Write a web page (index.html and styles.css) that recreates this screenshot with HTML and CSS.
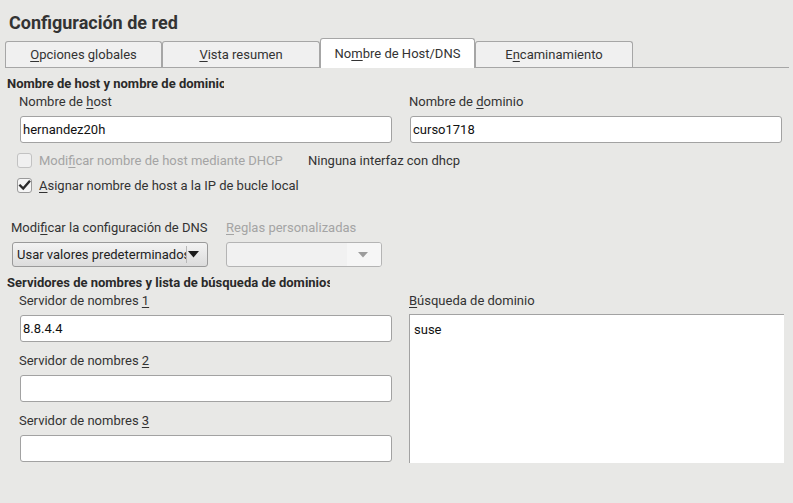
FILE: index.html
```html
<!DOCTYPE html>
<html lang="es">
<head>
<meta charset="utf-8">
<title>Configuración de red</title>
<link rel="stylesheet" href="styles.css">
</head>
<body>
<div class="win">
  <h1 class="title">Configuración de red</h1>

  <div class="tabs">
    <div class="tab t1"><u>O</u>pciones globales</div>
    <div class="tab t2"><u>V</u>ista resumen</div>
    <div class="tab t3 active">No<u>m</u>bre de Host/DNS</div>
    <div class="tab t4">E<u>n</u>caminamiento</div>
  </div>

  <div class="section-head sh1">Nombre de host y nombre de dominio</div>
  <div class="grid">
    <div class="field">
      <div class="label">Nombre de <u>h</u>ost</div>
      <div class="input">hernandez20h</div>
    </div>
    <div class="field">
      <div class="label">Nombre de <u>d</u>ominio</div>
      <div class="input">curso1718</div>
    </div>
  </div>

  <div class="checks">
    <div class="check-row">
      <div class="check-main">
        <span class="cb disabled"></span>
        <span class="cb-label dim">Modi<u>f</u>icar nombre de host mediante DHCP</span>
      </div>
      <span class="note">Ninguna interfaz con dhcp</span>
    </div>
    <div class="check-row">
      <div class="check-main">
        <span class="cb checked"><svg width="13" height="13" viewBox="0 0 13 13"><path d="M2.2 6.6 L5.2 9.6 L11.2 2.6" fill="none" stroke="#2d2d2d" stroke-width="2.4" stroke-linecap="square"/></svg></span>
        <span class="cb-label"><u>A</u>signar nombre de host a la IP de bucle local</span>
      </div>
    </div>
  </div>

  <div class="dns-row">
    <div class="dns-col c1">
      <div class="label">Modi<u>f</u>icar la configuración de DNS</div>
      <div class="select s1">
        <span class="sel-text">Usar valores predeterminados</span>
        <span class="sel-sep"></span>
        <svg class="sel-arrow" width="11" height="7" viewBox="0 0 11 7"><path d="M0 0 H11 L5.5 6.5 Z" fill="#1c1c1c"/></svg>
      </div>
    </div>
    <div class="dns-col c2">
      <div class="label dim"><u>R</u>eglas personalizadas</div>
      <div class="select s2">
        <span class="sel-fill"></span>
        <span class="sel-end"><svg width="10" height="6" viewBox="0 0 10 6"><path d="M0 0 H10 L5 5.5 Z" fill="#9c9c9c"/></svg></span>
      </div>
    </div>
  </div>

  <div class="section-head sh2">Servidores de nombres y lista de búsqueda de dominios</div>
  <div class="grid">
    <div class="col">
      <div class="field">
        <div class="label">Servidor de nombres <u>1</u></div>
        <div class="input">8.8.4.4</div>
      </div>
      <div class="field">
        <div class="label">Servidor de nombres <u>2</u></div>
        <div class="input"></div>
      </div>
      <div class="field">
        <div class="label">Servidor de nombres <u>3</u></div>
        <div class="input"></div>
      </div>
    </div>
    <div class="col">
      <div class="label"><u>B</u>úsqueda de dominio</div>
      <div class="textarea">suse</div>
    </div>
  </div>
</div>
</body>
</html>
```

FILE: styles.css
```css
html, body {
  margin: 0;
  padding: 0;
  background: #e8e8e6;
}
body {
  width: 793px;
  height: 503px;
  overflow: hidden;
  font-family: Roboto, "Noto Sans", "Liberation Sans", sans-serif;
  font-size: 13px;
  color: #333333;
}
u {
  text-decoration: underline;
  text-underline-offset: 2px;
}
.title {
  margin: 0;
  padding: 7px 0 0 9px;
  height: 31px;
  line-height: 31px;
  font-size: 18px;
  font-weight: 700;
  color: #333333;
}
.tabs {
  display: flex;
  align-items: flex-end;
  height: 29px;
  margin: 0 4px 0 5px;
  border-bottom: 1px solid #a6a6a6;
}
.tab {
  box-sizing: border-box;
  height: 26px;
  line-height: 25px;
  text-align: center;
  background: #f0f0f0;
  border: 1px solid #a6a6a6;
  border-bottom: none;
  border-radius: 3px 3px 0 0;
  color: #333333;
  white-space: nowrap;
}
.t1 { width: 157px; }
.t2 { width: 158px; }
.t3 { width: 155px; }
.t4 { width: 158px; }
.tab.active {
  height: 30px;
  padding-top: 2px;
  margin-bottom: -1px;
  background: #ffffff;
}
.section-head {
  margin-left: 7px;
  height: 18px;
  line-height: 18px;
  font-weight: 700;
  color: #2a2a2a;
  white-space: nowrap;
  overflow: hidden;
}
.sh1 { margin-top: 7px; width: 217px; }
.sh2 { margin-top: 7px; width: 323px; }
.grid {
  display: grid;
  grid-template-columns: 372px 372px;
  column-gap: 18px;
  margin-left: 20px;
}
.col {
  display: flex;
  flex-direction: column;
}
.col .field + .field {
  margin-top: 10px;
}
.label {
  height: 18px;
  line-height: 18px;
  margin-left: -1px;
  margin-bottom: 5px;
  white-space: nowrap;
  color: #333333;
}
.dim {
  color: #a4a4a4;
}
.input {
  box-sizing: border-box;
  height: 27px;
  line-height: 25px;
  padding-left: 2px;
  background: #ffffff;
  border: 1px solid #a2a2a2;
  border-radius: 3px;
  color: #111111;
}
.textarea {
  box-sizing: border-box;
  margin-top: -1px;
  margin-left: -1px;
  width: 375px;
  height: 149px;
  padding: 6px 4px;
  line-height: 18px;
  background: #ffffff;
  border-top: 1px solid #a2a2a2;
  border-left: 1px solid #a2a2a2;
  color: #111111;
}
.checks {
  margin-top: 5px;
}
.check-row {
  display: flex;
  align-items: center;
  height: 25px;
  padding-left: 17px;
}
.check-main {
  display: flex;
  align-items: center;
  width: 291px;
}
.cb {
  box-sizing: border-box;
  width: 15px;
  height: 15px;
  margin-right: 7px;
  border-radius: 3px;
  display: flex;
  align-items: center;
  justify-content: center;
}
.cb.disabled {
  background: #f0f0f0;
  border: 1px solid #c2c2c2;
}
.cb.checked {
  background: #f6f6f6;
  border: 1px solid #9a9a9a;
}
.cb-label {
  white-space: nowrap;
}
.note {
  white-space: nowrap;
  color: #333333;
}
.dns-row {
  display: flex;
  margin-top: 21px;
  margin-left: 11px;
}
.dns-col.c1 {
  width: 215px;
}
.dns-col .label {
  margin-left: 0;
}
.select {
  box-sizing: border-box;
  height: 25px;
  border-radius: 3px;
  display: flex;
  align-items: center;
}
.s1 {
  width: 196px;
  margin-left: 1px;
  padding-left: 4px;
  border: 1px solid #9a9a9a;
  background: linear-gradient(#f3f3f3, #dcdcdc);
  color: #222222;
}
.sel-text {
  width: 169px;
  overflow: hidden;
  white-space: nowrap;
}
.sel-sep {
  width: 1px;
  height: 17px;
  background: #b8b8b8;
}
.sel-arrow {
  margin-left: 1px;
}
.s2 {
  width: 156px;
  border: 1px solid #b4b4b4;
  background: #f1f1f1;
  overflow: hidden;
}
.sel-fill {
  flex: 1;
  height: 100%;
}
.sel-end {
  width: 34px;
  height: 100%;
  background: #f6f6f6;
  display: flex;
  align-items: center;
  justify-content: center;
  padding-right: 2px;
  box-sizing: border-box;
}
```
